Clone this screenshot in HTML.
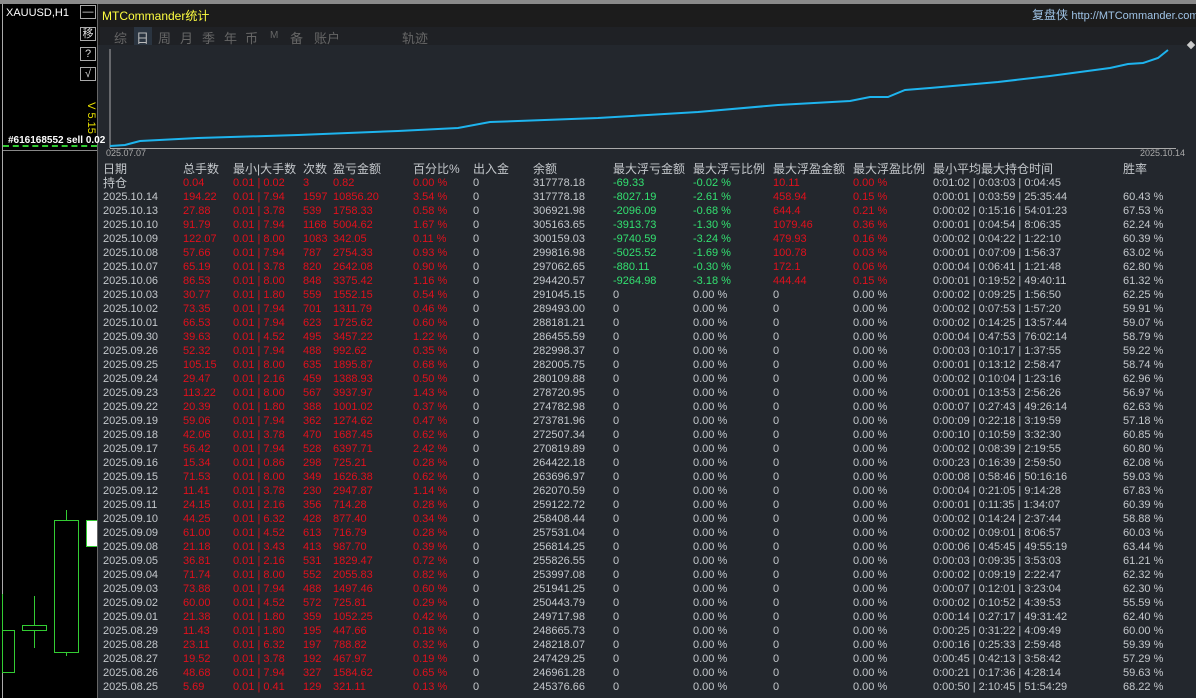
<!DOCTYPE html><html><head><meta charset="utf-8"><style>
*{margin:0;padding:0;box-sizing:border-box}
html,body{width:1196px;height:698px;overflow:hidden}
body{background:#000;font-family:"Liberation Sans","Noto Sans CJK SC",sans-serif;position:relative;color:#c4c8cc}
.a{position:absolute;white-space:nowrap}
#top{left:0;top:0;width:1196px;height:4px;background:#8a8a8a}
#panel{left:97px;top:4px;width:1099px;height:694px;background:#23272d;border-left:1px solid #666}
#hdr{left:98px;top:4px;width:1098px;height:41px;background:#1c1c1c}
.btn{position:absolute;left:80px;width:16px;height:14px;border:1px solid #aaa;color:#ddd;font-size:11px;text-align:center;line-height:12px;background:#000}
.r{position:absolute;left:0;width:1196px;height:14px;font-size:11px;line-height:14px}
.r span{position:absolute;white-space:nowrap}
.red{color:#e0101c}.grn{color:#33e070}
.t{position:absolute;top:28px;font-size:13px;color:#666}
.c1{left:103px}.c2{left:183px}.c3{left:233px}.c4{left:303px}.c5{left:333px}.c6{left:413px}.c7{left:473px}.c8{left:533px}.c9{left:613px}.c10{left:693px}.c11{left:773px}.c12{left:853px}.c13{left:933px}.c14{left:1123px}
</style></head><body>
<div class="a" id="top"></div>
<div class="a" style="left:2px;top:4px;width:1px;height:694px;background:#aaa"></div>
<div class="a" id="panel"></div>
<div class="a" id="hdr"></div>
<div class="a" style="left:6px;top:7px;font-size:11px;color:#fff">XAUUSD,H1</div>
<div class="btn" style="top:5px">—</div>
<div class="btn" style="top:27px">移</div>
<div class="btn" style="top:47px">?</div>
<div class="btn" style="top:67px">√</div>
<div class="a" style="left:75px;top:112px;font-size:11px;color:#e8e000;transform:rotate(90deg)">V 5.15</div>
<div class="a" style="left:8px;top:135px;font-size:10px;color:#fff;font-weight:bold">#616168552 sell 0.02</div>
<div class="a" style="left:3px;top:145px;width:94px;border-top:2px dashed #3c3"></div>
<div class="a" style="left:3px;top:150px;width:94px;height:1px;background:#888"></div>
<svg class="a" style="left:0;top:480px" width="97" height="218"><g fill="none" stroke="#3c3" stroke-width="1"><rect x="54.5" y="40.5" width="24" height="132"/><line x1="66.5" y1="30" x2="66.5" y2="40"/><line x1="66.5" y1="172" x2="66.5" y2="176"/><rect x="22.5" y="145.5" width="24" height="5"/><line x1="34.5" y1="116" x2="34.5" y2="145"/><line x1="34.5" y1="151" x2="34.5" y2="168"/><rect x="2.5" y="150.5" width="12" height="42"/><line x1="2.5" y1="114" x2="2.5" y2="150"/></g><rect x="86.5" y="40.5" width="11" height="26" fill="#fff" stroke="#3c3"/></svg>
<div class="a" style="left:102px;top:7px;font-size:12px;color:#ffff40">MTCommander统计</div>
<div class="a" style="left:1032px;top:6px;font-size:12px;color:#9fc3e6">复盘侠 <span style="font-size:11px">http://MTCommander.com</span></div>
<div class="a" style="left:100px;top:27px;width:1096px;height:18px;background:#1f2125"></div>
<div class="a" style="left:134px;top:27px;width:18px;height:18px;background:#2a3440"></div>
<span class="t" style="left:114px">综</span><span class="t" style="left:136px;color:#bbb">日</span><span class="t" style="left:158px">周</span><span class="t" style="left:180px">月</span><span class="t" style="left:202px">季</span><span class="t" style="left:224px">年</span><span class="t" style="left:245px">币</span><span class="t" style="left:270px;font-size:10px;top:30px">M</span><span class="t" style="left:290px">备</span><span class="t" style="left:314px">账户</span><span class="t" style="left:402px">轨迹</span>
<svg class="a" style="left:98px;top:45px" width="1098" height="120"><line x1="12" y1="4" x2="12" y2="103" stroke="#aaa"/><line x1="12" y1="103.5" x2="1078" y2="103.5" stroke="#aaa"/>
<polyline fill="none" stroke="#1eb4ee" stroke-width="2" points="12,101 27,100 42,96 100,93 200,90 300,86 360,83 392,77 420,76 500,73 600,67 680,60 752,56 772,52 790,52 807,45 832,43 900,37 952,31 1012,23 1030,19 1045,18 1060,13 1070,5"/>
<text x="8" y="111" fill="#aaa" font-size="9" font-family="Liberation Sans">025.07.07</text><text x="1042" y="111" fill="#aaa" font-size="9" font-family="Liberation Sans">2025.10.14</text></svg>
<div class="a" style="left:1188px;top:42px;width:6px;height:6px;background:#ccc;transform:rotate(45deg)"></div>
<div class="r" style="top:162px;font-size:12px"><span class="c1">日期</span><span class="c2">总手数</span><span class="c3">最小|大手数</span><span class="c4">次数</span><span class="c5">盈亏金额</span><span class="c6">百分比%</span><span class="c7">出入金</span><span class="c8">余额</span><span class="c9">最大浮亏金额</span><span class="c10">最大浮亏比例</span><span class="c11">最大浮盈金额</span><span class="c12">最大浮盈比例</span><span class="c13">最小平均最大持仓时间</span><span class="c14">胜率</span></div>
<div class="r" style="top:176px"><span class="c1" style="font-size:12px">持仓</span><span class="c2 red">0.04</span><span class="c3 red">0.01 | 0.02</span><span class="c4 red">3</span><span class="c5 red">0.82</span><span class="c6 red">0.00 %</span><span class="c7">0</span><span class="c8">317778.18</span><span class="c9 grn">-69.33</span><span class="c10 grn">-0.02 %</span><span class="c11 red">10.11</span><span class="c12 red">0.00 %</span><span class="c13">0:01:02 | 0:03:03 | 0:04:45</span></div>
<div class="r" style="top:190px"><span class="c1">2025.10.14</span><span class="c2 red">194.22</span><span class="c3 red">0.01 | 7.94</span><span class="c4 red">1597</span><span class="c5 red">10856.20</span><span class="c6 red">3.54 %</span><span class="c7">0</span><span class="c8">317778.18</span><span class="c9 grn">-8027.19</span><span class="c10 grn">-2.61 %</span><span class="c11 red">458.94</span><span class="c12 red">0.15 %</span><span class="c13">0:00:01 | 0:03:59 | 25:35:44</span><span class="c14">60.43 %</span></div>
<div class="r" style="top:204px"><span class="c1">2025.10.13</span><span class="c2 red">27.88</span><span class="c3 red">0.01 | 3.78</span><span class="c4 red">539</span><span class="c5 red">1758.33</span><span class="c6 red">0.58 %</span><span class="c7">0</span><span class="c8">306921.98</span><span class="c9 grn">-2096.09</span><span class="c10 grn">-0.68 %</span><span class="c11 red">644.4</span><span class="c12 red">0.21 %</span><span class="c13">0:00:02 | 0:15:16 | 54:01:23</span><span class="c14">67.53 %</span></div>
<div class="r" style="top:218px"><span class="c1">2025.10.10</span><span class="c2 red">91.79</span><span class="c3 red">0.01 | 7.94</span><span class="c4 red">1168</span><span class="c5 red">5004.62</span><span class="c6 red">1.67 %</span><span class="c7">0</span><span class="c8">305163.65</span><span class="c9 grn">-3913.73</span><span class="c10 grn">-1.30 %</span><span class="c11 red">1079.46</span><span class="c12 red">0.36 %</span><span class="c13">0:00:01 | 0:04:54 | 8:06:35</span><span class="c14">62.24 %</span></div>
<div class="r" style="top:232px"><span class="c1">2025.10.09</span><span class="c2 red">122.07</span><span class="c3 red">0.01 | 8.00</span><span class="c4 red">1083</span><span class="c5 red">342.05</span><span class="c6 red">0.11 %</span><span class="c7">0</span><span class="c8">300159.03</span><span class="c9 grn">-9740.59</span><span class="c10 grn">-3.24 %</span><span class="c11 red">479.93</span><span class="c12 red">0.16 %</span><span class="c13">0:00:02 | 0:04:22 | 1:22:10</span><span class="c14">60.39 %</span></div>
<div class="r" style="top:246px"><span class="c1">2025.10.08</span><span class="c2 red">57.66</span><span class="c3 red">0.01 | 7.94</span><span class="c4 red">787</span><span class="c5 red">2754.33</span><span class="c6 red">0.93 %</span><span class="c7">0</span><span class="c8">299816.98</span><span class="c9 grn">-5025.52</span><span class="c10 grn">-1.69 %</span><span class="c11 red">100.78</span><span class="c12 red">0.03 %</span><span class="c13">0:00:01 | 0:07:09 | 1:56:37</span><span class="c14">63.02 %</span></div>
<div class="r" style="top:260px"><span class="c1">2025.10.07</span><span class="c2 red">65.19</span><span class="c3 red">0.01 | 3.78</span><span class="c4 red">820</span><span class="c5 red">2642.08</span><span class="c6 red">0.90 %</span><span class="c7">0</span><span class="c8">297062.65</span><span class="c9 grn">-880.11</span><span class="c10 grn">-0.30 %</span><span class="c11 red">172.1</span><span class="c12 red">0.06 %</span><span class="c13">0:00:04 | 0:06:41 | 1:21:48</span><span class="c14">62.80 %</span></div>
<div class="r" style="top:274px"><span class="c1">2025.10.06</span><span class="c2 red">86.53</span><span class="c3 red">0.01 | 8.00</span><span class="c4 red">848</span><span class="c5 red">3375.42</span><span class="c6 red">1.16 %</span><span class="c7">0</span><span class="c8">294420.57</span><span class="c9 grn">-9264.98</span><span class="c10 grn">-3.18 %</span><span class="c11 red">444.44</span><span class="c12 red">0.15 %</span><span class="c13">0:00:01 | 0:19:52 | 49:40:11</span><span class="c14">61.32 %</span></div>
<div class="r" style="top:288px"><span class="c1">2025.10.03</span><span class="c2 red">30.77</span><span class="c3 red">0.01 | 1.80</span><span class="c4 red">559</span><span class="c5 red">1552.15</span><span class="c6 red">0.54 %</span><span class="c7">0</span><span class="c8">291045.15</span><span class="c9">0</span><span class="c10">0.00 %</span><span class="c11">0</span><span class="c12">0.00 %</span><span class="c13">0:00:02 | 0:09:25 | 1:56:50</span><span class="c14">62.25 %</span></div>
<div class="r" style="top:302px"><span class="c1">2025.10.02</span><span class="c2 red">73.35</span><span class="c3 red">0.01 | 7.94</span><span class="c4 red">701</span><span class="c5 red">1311.79</span><span class="c6 red">0.46 %</span><span class="c7">0</span><span class="c8">289493.00</span><span class="c9">0</span><span class="c10">0.00 %</span><span class="c11">0</span><span class="c12">0.00 %</span><span class="c13">0:00:02 | 0:07:53 | 1:57:20</span><span class="c14">59.91 %</span></div>
<div class="r" style="top:316px"><span class="c1">2025.10.01</span><span class="c2 red">66.53</span><span class="c3 red">0.01 | 7.94</span><span class="c4 red">623</span><span class="c5 red">1725.62</span><span class="c6 red">0.60 %</span><span class="c7">0</span><span class="c8">288181.21</span><span class="c9">0</span><span class="c10">0.00 %</span><span class="c11">0</span><span class="c12">0.00 %</span><span class="c13">0:00:02 | 0:14:25 | 13:57:44</span><span class="c14">59.07 %</span></div>
<div class="r" style="top:330px"><span class="c1">2025.09.30</span><span class="c2 red">39.63</span><span class="c3 red">0.01 | 4.52</span><span class="c4 red">495</span><span class="c5 red">3457.22</span><span class="c6 red">1.22 %</span><span class="c7">0</span><span class="c8">286455.59</span><span class="c9">0</span><span class="c10">0.00 %</span><span class="c11">0</span><span class="c12">0.00 %</span><span class="c13">0:00:04 | 0:47:53 | 76:02:14</span><span class="c14">58.79 %</span></div>
<div class="r" style="top:344px"><span class="c1">2025.09.26</span><span class="c2 red">52.32</span><span class="c3 red">0.01 | 7.94</span><span class="c4 red">488</span><span class="c5 red">992.62</span><span class="c6 red">0.35 %</span><span class="c7">0</span><span class="c8">282998.37</span><span class="c9">0</span><span class="c10">0.00 %</span><span class="c11">0</span><span class="c12">0.00 %</span><span class="c13">0:00:03 | 0:10:17 | 1:37:55</span><span class="c14">59.22 %</span></div>
<div class="r" style="top:358px"><span class="c1">2025.09.25</span><span class="c2 red">105.15</span><span class="c3 red">0.01 | 8.00</span><span class="c4 red">635</span><span class="c5 red">1895.87</span><span class="c6 red">0.68 %</span><span class="c7">0</span><span class="c8">282005.75</span><span class="c9">0</span><span class="c10">0.00 %</span><span class="c11">0</span><span class="c12">0.00 %</span><span class="c13">0:00:01 | 0:13:12 | 2:58:47</span><span class="c14">58.74 %</span></div>
<div class="r" style="top:372px"><span class="c1">2025.09.24</span><span class="c2 red">29.47</span><span class="c3 red">0.01 | 2.16</span><span class="c4 red">459</span><span class="c5 red">1388.93</span><span class="c6 red">0.50 %</span><span class="c7">0</span><span class="c8">280109.88</span><span class="c9">0</span><span class="c10">0.00 %</span><span class="c11">0</span><span class="c12">0.00 %</span><span class="c13">0:00:02 | 0:10:04 | 1:23:16</span><span class="c14">62.96 %</span></div>
<div class="r" style="top:386px"><span class="c1">2025.09.23</span><span class="c2 red">113.22</span><span class="c3 red">0.01 | 8.00</span><span class="c4 red">567</span><span class="c5 red">3937.97</span><span class="c6 red">1.43 %</span><span class="c7">0</span><span class="c8">278720.95</span><span class="c9">0</span><span class="c10">0.00 %</span><span class="c11">0</span><span class="c12">0.00 %</span><span class="c13">0:00:01 | 0:13:53 | 2:56:26</span><span class="c14">56.97 %</span></div>
<div class="r" style="top:400px"><span class="c1">2025.09.22</span><span class="c2 red">20.39</span><span class="c3 red">0.01 | 1.80</span><span class="c4 red">388</span><span class="c5 red">1001.02</span><span class="c6 red">0.37 %</span><span class="c7">0</span><span class="c8">274782.98</span><span class="c9">0</span><span class="c10">0.00 %</span><span class="c11">0</span><span class="c12">0.00 %</span><span class="c13">0:00:07 | 0:27:43 | 49:26:14</span><span class="c14">62.63 %</span></div>
<div class="r" style="top:414px"><span class="c1">2025.09.19</span><span class="c2 red">59.06</span><span class="c3 red">0.01 | 7.94</span><span class="c4 red">362</span><span class="c5 red">1274.62</span><span class="c6 red">0.47 %</span><span class="c7">0</span><span class="c8">273781.96</span><span class="c9">0</span><span class="c10">0.00 %</span><span class="c11">0</span><span class="c12">0.00 %</span><span class="c13">0:00:09 | 0:22:18 | 3:19:59</span><span class="c14">57.18 %</span></div>
<div class="r" style="top:428px"><span class="c1">2025.09.18</span><span class="c2 red">42.06</span><span class="c3 red">0.01 | 3.78</span><span class="c4 red">470</span><span class="c5 red">1687.45</span><span class="c6 red">0.62 %</span><span class="c7">0</span><span class="c8">272507.34</span><span class="c9">0</span><span class="c10">0.00 %</span><span class="c11">0</span><span class="c12">0.00 %</span><span class="c13">0:00:10 | 0:10:59 | 3:32:30</span><span class="c14">60.85 %</span></div>
<div class="r" style="top:442px"><span class="c1">2025.09.17</span><span class="c2 red">56.42</span><span class="c3 red">0.01 | 7.94</span><span class="c4 red">528</span><span class="c5 red">6397.71</span><span class="c6 red">2.42 %</span><span class="c7">0</span><span class="c8">270819.89</span><span class="c9">0</span><span class="c10">0.00 %</span><span class="c11">0</span><span class="c12">0.00 %</span><span class="c13">0:00:02 | 0:08:39 | 2:19:55</span><span class="c14">60.80 %</span></div>
<div class="r" style="top:456px"><span class="c1">2025.09.16</span><span class="c2 red">15.34</span><span class="c3 red">0.01 | 0.86</span><span class="c4 red">298</span><span class="c5 red">725.21</span><span class="c6 red">0.28 %</span><span class="c7">0</span><span class="c8">264422.18</span><span class="c9">0</span><span class="c10">0.00 %</span><span class="c11">0</span><span class="c12">0.00 %</span><span class="c13">0:00:23 | 0:16:39 | 2:59:50</span><span class="c14">62.08 %</span></div>
<div class="r" style="top:470px"><span class="c1">2025.09.15</span><span class="c2 red">71.53</span><span class="c3 red">0.01 | 8.00</span><span class="c4 red">349</span><span class="c5 red">1626.38</span><span class="c6 red">0.62 %</span><span class="c7">0</span><span class="c8">263696.97</span><span class="c9">0</span><span class="c10">0.00 %</span><span class="c11">0</span><span class="c12">0.00 %</span><span class="c13">0:00:08 | 0:58:46 | 50:16:16</span><span class="c14">59.03 %</span></div>
<div class="r" style="top:484px"><span class="c1">2025.09.12</span><span class="c2 red">11.41</span><span class="c3 red">0.01 | 3.78</span><span class="c4 red">230</span><span class="c5 red">2947.87</span><span class="c6 red">1.14 %</span><span class="c7">0</span><span class="c8">262070.59</span><span class="c9">0</span><span class="c10">0.00 %</span><span class="c11">0</span><span class="c12">0.00 %</span><span class="c13">0:00:04 | 0:21:05 | 9:14:28</span><span class="c14">67.83 %</span></div>
<div class="r" style="top:498px"><span class="c1">2025.09.11</span><span class="c2 red">24.15</span><span class="c3 red">0.01 | 2.16</span><span class="c4 red">356</span><span class="c5 red">714.28</span><span class="c6 red">0.28 %</span><span class="c7">0</span><span class="c8">259122.72</span><span class="c9">0</span><span class="c10">0.00 %</span><span class="c11">0</span><span class="c12">0.00 %</span><span class="c13">0:00:01 | 0:11:35 | 1:34:07</span><span class="c14">60.39 %</span></div>
<div class="r" style="top:512px"><span class="c1">2025.09.10</span><span class="c2 red">44.25</span><span class="c3 red">0.01 | 6.32</span><span class="c4 red">428</span><span class="c5 red">877.40</span><span class="c6 red">0.34 %</span><span class="c7">0</span><span class="c8">258408.44</span><span class="c9">0</span><span class="c10">0.00 %</span><span class="c11">0</span><span class="c12">0.00 %</span><span class="c13">0:00:02 | 0:14:24 | 2:37:44</span><span class="c14">58.88 %</span></div>
<div class="r" style="top:526px"><span class="c1">2025.09.09</span><span class="c2 red">61.00</span><span class="c3 red">0.01 | 4.52</span><span class="c4 red">613</span><span class="c5 red">716.79</span><span class="c6 red">0.28 %</span><span class="c7">0</span><span class="c8">257531.04</span><span class="c9">0</span><span class="c10">0.00 %</span><span class="c11">0</span><span class="c12">0.00 %</span><span class="c13">0:00:02 | 0:09:01 | 8:06:57</span><span class="c14">60.03 %</span></div>
<div class="r" style="top:540px"><span class="c1">2025.09.08</span><span class="c2 red">21.18</span><span class="c3 red">0.01 | 3.43</span><span class="c4 red">413</span><span class="c5 red">987.70</span><span class="c6 red">0.39 %</span><span class="c7">0</span><span class="c8">256814.25</span><span class="c9">0</span><span class="c10">0.00 %</span><span class="c11">0</span><span class="c12">0.00 %</span><span class="c13">0:00:06 | 0:45:45 | 49:55:19</span><span class="c14">63.44 %</span></div>
<div class="r" style="top:554px"><span class="c1">2025.09.05</span><span class="c2 red">36.81</span><span class="c3 red">0.01 | 2.16</span><span class="c4 red">531</span><span class="c5 red">1829.47</span><span class="c6 red">0.72 %</span><span class="c7">0</span><span class="c8">255826.55</span><span class="c9">0</span><span class="c10">0.00 %</span><span class="c11">0</span><span class="c12">0.00 %</span><span class="c13">0:00:03 | 0:09:35 | 3:53:03</span><span class="c14">61.21 %</span></div>
<div class="r" style="top:568px"><span class="c1">2025.09.04</span><span class="c2 red">71.74</span><span class="c3 red">0.01 | 8.00</span><span class="c4 red">552</span><span class="c5 red">2055.83</span><span class="c6 red">0.82 %</span><span class="c7">0</span><span class="c8">253997.08</span><span class="c9">0</span><span class="c10">0.00 %</span><span class="c11">0</span><span class="c12">0.00 %</span><span class="c13">0:00:02 | 0:09:19 | 2:22:47</span><span class="c14">62.32 %</span></div>
<div class="r" style="top:582px"><span class="c1">2025.09.03</span><span class="c2 red">73.88</span><span class="c3 red">0.01 | 7.94</span><span class="c4 red">488</span><span class="c5 red">1497.46</span><span class="c6 red">0.60 %</span><span class="c7">0</span><span class="c8">251941.25</span><span class="c9">0</span><span class="c10">0.00 %</span><span class="c11">0</span><span class="c12">0.00 %</span><span class="c13">0:00:07 | 0:12:01 | 3:23:04</span><span class="c14">62.30 %</span></div>
<div class="r" style="top:596px"><span class="c1">2025.09.02</span><span class="c2 red">60.00</span><span class="c3 red">0.01 | 4.52</span><span class="c4 red">572</span><span class="c5 red">725.81</span><span class="c6 red">0.29 %</span><span class="c7">0</span><span class="c8">250443.79</span><span class="c9">0</span><span class="c10">0.00 %</span><span class="c11">0</span><span class="c12">0.00 %</span><span class="c13">0:00:02 | 0:10:52 | 4:39:53</span><span class="c14">55.59 %</span></div>
<div class="r" style="top:610px"><span class="c1">2025.09.01</span><span class="c2 red">21.38</span><span class="c3 red">0.01 | 1.80</span><span class="c4 red">359</span><span class="c5 red">1052.25</span><span class="c6 red">0.42 %</span><span class="c7">0</span><span class="c8">249717.98</span><span class="c9">0</span><span class="c10">0.00 %</span><span class="c11">0</span><span class="c12">0.00 %</span><span class="c13">0:00:14 | 0:27:17 | 49:31:42</span><span class="c14">62.40 %</span></div>
<div class="r" style="top:624px"><span class="c1">2025.08.29</span><span class="c2 red">11.43</span><span class="c3 red">0.01 | 1.80</span><span class="c4 red">195</span><span class="c5 red">447.66</span><span class="c6 red">0.18 %</span><span class="c7">0</span><span class="c8">248665.73</span><span class="c9">0</span><span class="c10">0.00 %</span><span class="c11">0</span><span class="c12">0.00 %</span><span class="c13">0:00:25 | 0:31:22 | 4:09:49</span><span class="c14">60.00 %</span></div>
<div class="r" style="top:638px"><span class="c1">2025.08.28</span><span class="c2 red">23.11</span><span class="c3 red">0.01 | 6.32</span><span class="c4 red">197</span><span class="c5 red">788.82</span><span class="c6 red">0.32 %</span><span class="c7">0</span><span class="c8">248218.07</span><span class="c9">0</span><span class="c10">0.00 %</span><span class="c11">0</span><span class="c12">0.00 %</span><span class="c13">0:00:16 | 0:25:33 | 2:59:48</span><span class="c14">59.39 %</span></div>
<div class="r" style="top:652px"><span class="c1">2025.08.27</span><span class="c2 red">19.52</span><span class="c3 red">0.01 | 3.78</span><span class="c4 red">192</span><span class="c5 red">467.97</span><span class="c6 red">0.19 %</span><span class="c7">0</span><span class="c8">247429.25</span><span class="c9">0</span><span class="c10">0.00 %</span><span class="c11">0</span><span class="c12">0.00 %</span><span class="c13">0:00:45 | 0:42:13 | 3:58:42</span><span class="c14">57.29 %</span></div>
<div class="r" style="top:666px"><span class="c1">2025.08.26</span><span class="c2 red">48.68</span><span class="c3 red">0.01 | 7.94</span><span class="c4 red">327</span><span class="c5 red">1584.62</span><span class="c6 red">0.65 %</span><span class="c7">0</span><span class="c8">246961.28</span><span class="c9">0</span><span class="c10">0.00 %</span><span class="c11">0</span><span class="c12">0.00 %</span><span class="c13">0:00:21 | 0:17:36 | 4:28:14</span><span class="c14">59.63 %</span></div>
<div class="r" style="top:680px"><span class="c1">2025.08.25</span><span class="c2 red">5.69</span><span class="c3 red">0.01 | 0.41</span><span class="c4 red">129</span><span class="c5 red">321.11</span><span class="c6 red">0.13 %</span><span class="c7">0</span><span class="c8">245376.66</span><span class="c9">0</span><span class="c10">0.00 %</span><span class="c11">0</span><span class="c12">0.00 %</span><span class="c13">0:00:50 | 2:10:45 | 51:54:29</span><span class="c14">68.22 %</span></div>
</body></html>
